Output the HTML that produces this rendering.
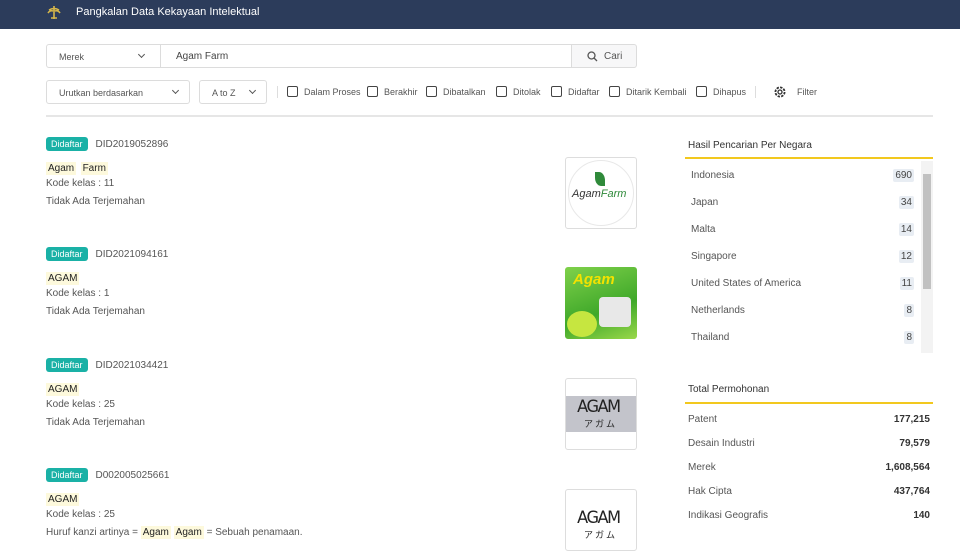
<!DOCTYPE html>
<html><head><meta charset="utf-8"><style>
*{box-sizing:border-box;margin:0;padding:0}
body{width:960px;height:548px;overflow:hidden;background:#fff;font-family:"Liberation Sans","DejaVu Sans",sans-serif;color:#555;position:relative}
.a{position:absolute}
.hdr{left:0;top:0;width:960px;height:29px;background:#2c3c5b;color:#fff;font-size:11px}
.box{border:1px solid #dcdcdc;border-radius:3px;background:#fff}
.chev{position:absolute;width:5px;height:5px;border-right:1.3px solid #555;border-bottom:1.3px solid #555;transform:rotate(45deg)}
.cb{position:absolute;width:11px;height:11px;border:1.5px solid #444;border-radius:2px;top:86px}
.lab{position:absolute;top:87px;font-size:9px;color:#555}
.badge{background:#1ab1a6;color:#fff;font-size:9px;border-radius:3px;padding:2px 5px;height:14px;line-height:10px}
.hl{background:#fdf9dc;color:#222;padding:1px 2px;font-size:10px}
.t10{font-size:10px}
.img{border:1px solid #ddd;border-radius:3px;width:72px;height:72px;overflow:hidden;background:#fff}
.cnt{position:absolute;right:19px;background:#e8edf3;font-size:10px;padding:1px 2px;border-radius:2px;color:#444}
.ag{position:absolute;left:10px;font-size:17px;color:#222;font-family:"DejaVu Sans",sans-serif;letter-spacing:-1.5px;transform:scaleX(0.95)}
</style></head><body>
<div class="a hdr"><svg class="a" style="left:47px;top:5px" width="14" height="15" viewBox="0 0 14 15"><path d="M7 1 L7 14 M2 5 Q7 2 12 5 M1 8 Q3 5 6 6 M13 8 Q11 5 8 6 M4 13 H10" stroke="#d8b84a" stroke-width="1.6" fill="none"/></svg><span class="a" style="left:76px;top:6px">Pangkalan Data Kekayaan Intelektual</span></div>

<div class="a box" style="left:46px;top:44px;width:115px;height:24px;border-radius:3px 0 0 3px"><span class="a" style="left:12px;top:7px;font-size:9px">Merek</span><div class="chev" style="left:92px;top:7px"></div></div>
<div class="a box" style="left:160px;top:44px;width:412px;height:24px;border-radius:0"><span class="a" style="left:15px;top:6px;font-size:10px;color:#444">Agam Farm</span></div>
<div class="a box" style="left:571px;top:44px;width:66px;height:24px;background:#f7f7f8;border-radius:0 3px 3px 0"><svg class="a" style="left:15px;top:6px" width="11" height="11"><circle cx="4.5" cy="4.5" r="3.5" stroke="#555" stroke-width="1.3" fill="none"/><path d="M7 7 L10 10" stroke="#555" stroke-width="1.3"/></svg><span class="a" style="left:32px;top:6px;font-size:10px">Cari</span></div>

<div class="a box" style="left:46px;top:80px;width:144px;height:24px"><span class="a" style="left:12px;top:7px;font-size:9px">Urutkan berdasarkan</span><div class="chev" style="left:126px;top:7px"></div></div>
<div class="a box" style="left:199px;top:80px;width:68px;height:24px"><span class="a" style="left:12px;top:7px;font-size:9px">A to Z</span><div class="chev" style="left:50px;top:7px"></div></div>
<div class="a" style="left:277px;top:86px;width:1px;height:12px;background:#ddd"></div>
<div class="cb" style="left:287px"></div><span class="lab" style="left:304px">Dalam Proses</span>
<div class="cb" style="left:367px"></div><span class="lab" style="left:384px">Berakhir</span>
<div class="cb" style="left:426px"></div><span class="lab" style="left:443px">Dibatalkan</span>
<div class="cb" style="left:496px"></div><span class="lab" style="left:513px">Ditolak</span>
<div class="cb" style="left:551px"></div><span class="lab" style="left:568px">Didaftar</span>
<div class="cb" style="left:609px"></div><span class="lab" style="left:626px">Ditarik Kembali</span>
<div class="cb" style="left:696px"></div><span class="lab" style="left:713px">Dihapus</span>
<div class="a" style="left:755px;top:86px;width:1px;height:12px;background:#ddd"></div>
<svg class="a" style="left:773px;top:85px" width="14" height="14" viewBox="0 0 14 14"><circle cx="7" cy="7" r="2" stroke="#333" stroke-width="1.3" fill="none"/><circle cx="7" cy="7" r="4.6" stroke="#333" stroke-width="1.8" stroke-dasharray="2.4 1.2" fill="none"/></svg>
<span class="lab" style="left:797px">Filter</span>
<div class="a" style="left:46px;top:115px;width:887px;height:2px;background:#e6e6e6"></div>

<!-- results -->
<div class="a" style="left:46px;top:134px"><span class="badge">Didaftar</span><span class="t10" style="margin-left:8px">DID2019052896</span></div>
<div class="a" style="left:46px;top:158px"><span class="hl">Agam</span> <span class="hl">Farm</span></div>
<div class="a t10" style="left:46px;top:178px">Kode kelas : 11</div>
<div class="a t10" style="left:46px;top:196px">Tidak Ada Terjemahan</div>

<div class="a" style="left:46px;top:244px"><span class="badge">Didaftar</span><span class="t10" style="margin-left:8px">DID2021094161</span></div>
<div class="a" style="left:46px;top:268px"><span class="hl">AGAM</span></div>
<div class="a t10" style="left:46px;top:288px">Kode kelas : 1</div>
<div class="a t10" style="left:46px;top:306px">Tidak Ada Terjemahan</div>

<div class="a" style="left:46px;top:355px"><span class="badge">Didaftar</span><span class="t10" style="margin-left:8px">DID2021034421</span></div>
<div class="a" style="left:46px;top:379px"><span class="hl">AGAM</span></div>
<div class="a t10" style="left:46px;top:399px">Kode kelas : 25</div>
<div class="a t10" style="left:46px;top:417px">Tidak Ada Terjemahan</div>

<div class="a" style="left:46px;top:465px"><span class="badge">Didaftar</span><span class="t10" style="margin-left:8px">D002005025661</span></div>
<div class="a" style="left:46px;top:489px"><span class="hl">AGAM</span></div>
<div class="a t10" style="left:46px;top:509px">Kode kelas : 25</div>
<div class="a t10" style="left:46px;top:527px">Huruf kanzi artinya = <span class="hl">Agam</span> <span class="hl">Agam</span> = Sebuah penamaan.</div>

<!-- images -->
<div class="a img" style="left:565px;top:157px"><div class="a" style="left:2px;top:2px;width:66px;height:66px;border:1px solid #e8e8e8;border-radius:50%"></div><div class="a" style="left:29px;top:14px;width:10px;height:14px;background:#2f8a3a;border-radius:0 60% 0 60%"></div><span class="a" style="left:6px;top:30px;font-size:11px;color:#333;font-style:italic">Agam<span style="color:#2f8a3a">Farm</span></span></div>
<div class="a img" style="left:565px;top:267px;background:linear-gradient(160deg,#7fd14a,#3fa82a 60%,#9ad84a);border:none"><span class="a" style="left:8px;top:4px;font-size:15px;color:#f3e200;font-style:italic;font-weight:bold">Agam</span><div class="a" style="left:34px;top:30px;width:32px;height:30px;background:#e8e8e8;border-radius:4px"></div><div class="a" style="left:2px;top:44px;width:30px;height:26px;background:#c6e640;border-radius:50%"></div></div>
<div class="a img" style="left:565px;top:378px"><div class="a" style="left:0;top:17px;width:72px;height:36px;background:#c3c4cb"></div><span class="ag" style="top:18px">AGAM</span><span class="a" style="left:18px;top:38px;font-size:9px;color:#222;font-family:'Noto Sans CJK JP',sans-serif">ア ガ ム</span></div>
<div class="a img" style="left:565px;top:489px;height:62px"><span class="ag" style="top:18px">AGAM</span><span class="a" style="left:18px;top:38px;font-size:9px;color:#222;font-family:'Noto Sans CJK JP',sans-serif">ア ガ ム</span></div>

<!-- right panel -->
<div class="a" style="left:688px;top:140px;font-size:10px;color:#333">Hasil Pencarian Per Negara</div>
<div class="a" style="left:685px;top:157px;width:248px;height:2px;background:#f2c81e"></div>
<div class="a" style="left:685px;top:161px;width:248px;height:192px;font-size:10px">
<div class="a" style="left:6px;top:9px">Indonesia</div><span class="cnt" style="top:8px">690</span>
<div class="a" style="left:6px;top:36px">Japan</div><span class="cnt" style="top:35px">34</span>
<div class="a" style="left:6px;top:63px">Malta</div><span class="cnt" style="top:62px">14</span>
<div class="a" style="left:6px;top:90px">Singapore</div><span class="cnt" style="top:89px">12</span>
<div class="a" style="left:6px;top:117px">United States of America</div><span class="cnt" style="top:116px">11</span>
<div class="a" style="left:6px;top:144px">Netherlands</div><span class="cnt" style="top:143px">8</span>
<div class="a" style="left:6px;top:171px">Thailand</div><span class="cnt" style="top:170px">8</span>
<div class="a" style="left:236px;top:0;width:12px;height:192px;background:#f3f3f3"></div>
<div class="a" style="left:238px;top:13px;width:8px;height:115px;background:#c1c1c1"></div>
</div>

<div class="a" style="left:688px;top:384px;font-size:10px;color:#333">Total Permohonan</div>
<div class="a" style="left:685px;top:402px;width:248px;height:2px;background:#f2c81e"></div>
<div class="a" style="left:688px;top:414px;width:242px;font-size:10px">
<div style="position:relative;height:24px">Patent<b style="position:absolute;right:0;color:#333">177,215</b></div>
<div style="position:relative;height:24px">Desain Industri<b style="position:absolute;right:0;color:#333">79,579</b></div>
<div style="position:relative;height:24px">Merek<b style="position:absolute;right:0;color:#333">1,608,564</b></div>
<div style="position:relative;height:24px">Hak Cipta<b style="position:absolute;right:0;color:#333">437,764</b></div>
<div style="position:relative;height:24px">Indikasi Geografis<b style="position:absolute;right:0;color:#333">140</b></div>
</div>
</body></html>
